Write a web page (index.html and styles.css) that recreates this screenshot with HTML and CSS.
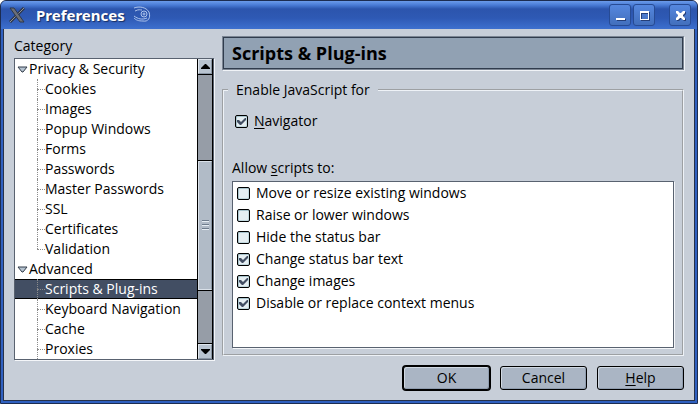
FILE: index.html
```html
<!DOCTYPE html>
<html lang="en">
<head>
  <meta charset="UTF-8" />
  <meta name="viewport" content="width=device-width, initial-scale=1.0" />
  <title>Preferences</title>
  <link rel="stylesheet" href="styles.css">
</head>
<body>
  <div class="window">
    <header class="titlebar">
      <svg class="app-icon" viewBox="0 0 16 16" width="16" height="16">
        <path d="M15 1L9 7M7 9l-6 6" stroke="#303848" stroke-width="3"/>
        <path d="M15 1L9 7M7 9l-6 6" stroke="#8d929b"/>
        <path d="M1 1h4l10 14h-4z" fill="#6b6f78" stroke="#303848"/>
      </svg>
      <h1 class="title">Preferences</h1>
      <svg class="gecko" viewBox="0 0 18 18" width="18" height="18" fill="none" stroke="#adc3ea">
        <path d="M1 2C6 0 13 1 16 6c2 6-1 10-6 9-5 0-7-1-9-3M1 10c4 3 8 4 13 2M2 5c4-2 5-1 7-1"/>
        <circle cx="11" cy="8" r="3"/>
        <circle cx="11" cy="8" r="1"/>
      </svg>
      <div class="window-buttons">
        <button class="window-button" aria-label="Minimize">
          <svg viewBox="0 0 22 22" width="22" height="22"><path d="M7 14h9v2H7z"/></svg>
        </button>
        <button class="window-button" aria-label="Maximize">
          <svg viewBox="0 0 22 22" width="22" height="22"><path fill-rule="evenodd" d="M7 7h9v9H7zM8 9v6h7V9z"/></svg>
        </button>
        <button class="window-button close" aria-label="Close">
          <svg viewBox="0 0 22 22" width="22" height="22"><path d="M7 7h2l2 2h1l2-2h2v2l-2 2v1l2 2v2h-2l-2-2h-1l-2 2H7v-2l2-2v-1L7 9z"/></svg>
        </button>
      </div>
    </header>

    <main class="content">
      <div class="panes">
        <section class="sidebar">
          <h2 class="label" id="category">Category</h2>
          <div class="tree-box">
            <ul class="tree" role="tree" aria-labelledby="category">
              <li>
                <div class="group"><svg viewBox="0 0 11 7" width="11" height="7"><path d="M1 1h9L6 6H5z"/></svg>Privacy &amp; Security</div>
                <ul class="branch">
                  <li>Cookies</li>
                  <li>Images</li>
                  <li>Popup Windows</li>
                  <li>Forms</li>
                  <li>Passwords</li>
                  <li>Master Passwords</li>
                  <li>SSL</li>
                  <li>Certificates</li>
                  <li class="last">Validation</li>
                </ul>
              </li>
              <li>
                <div class="group"><svg viewBox="0 0 11 7" width="11" height="7"><path d="M1 1h9L6 6H5z"/></svg>Advanced</div>
                <ul class="branch">
                  <li class="selected">Scripts &amp; Plug-ins</li>
                  <li>Keyboard Navigation</li>
                  <li>Cache</li>
                  <li>Proxies</li>
                </ul>
              </li>
            </ul>
            <div class="scrollbar">
              <button class="arrow" aria-label="Scroll up"><svg viewBox="0 0 9 5" width="9" height="5"><path d="M4 0h1l4 4v1H0V4z"/></svg></button>
              <div class="track"></div>
              <div class="thumb"><span class="grip"></span></div>
              <div class="track after"></div>
              <button class="arrow" aria-label="Scroll down"><svg viewBox="0 0 9 5" width="9" height="5"><path d="M4 5h1l4-4V0H0v1z"/></svg></button>
            </div>
          </div>
        </section>

        <section class="panel">
          <h2 class="panel-title">Scripts &amp; Plug-ins</h2>
          <fieldset class="settings">
            <legend>Enable JavaScript for</legend>
            <label class="option navigator"><input type="checkbox" checked><span><u>N</u>avigator</span></label>
            <h3 class="label" id="allow">Allow <u>s</u>cripts to:</h3>
            <div class="options" role="group" aria-labelledby="allow">
              <label class="option"><input type="checkbox">Move or resize existing windows</label>
              <label class="option"><input type="checkbox">Raise or lower windows</label>
              <label class="option"><input type="checkbox">Hide the status bar</label>
              <label class="option"><input type="checkbox" checked>Change status bar text</label>
              <label class="option"><input type="checkbox" checked>Change images</label>
              <label class="option"><input type="checkbox" checked>Disable or replace context menus</label>
            </div>
          </fieldset>
        </section>
      </div>

      <footer class="actions">
        <button class="action default">OK</button>
        <button class="action">Cancel</button>
        <button class="action"><u>H</u>elp</button>
      </footer>
    </main>
  </div>
</body>
</html>
```
FILE: styles.css
```css
* {
  box-sizing: border-box;
}
body {
  margin: 0;
  background-color: #fff;
  color: #000;
  font-family: "Open Sans", "Noto Sans", sans-serif;
  font-size: 14px;
  line-height: 20px;
}
h1, h2, h3, ul {
  margin: 0;
  padding: 0;
  font-weight: normal;
}
ul {
  list-style: none;
}
button {
  padding: 0;
  font: inherit;
}
u {
  text-underline-offset: 2px;
}
.window {
  display: flex;
  flex-direction: column;
  height: 100vh;
  background-color: #2f60c0;
  border: 1px solid #1c2c50;
  border-radius: 6px 6px 0 0;
  overflow: hidden;
}
.titlebar {
  display: flex;
  align-items: center;
  height: 28px;
  padding: 0 6px 0 8px;
  background: linear-gradient(#6b9bea 0, #4a7cd6 4px, #2c55ad 8px, #2e59b4 17px, #3d70cf 28px);
}
.title {
  margin: 0 8px 0 11px;
  color: #fff;
  font-family: "Noto Sans", sans-serif;
  font-size: 15px;
  font-weight: bold;
  text-shadow: 1px 1px 1px #172d60;
}
.window-buttons {
  display: flex;
  gap: 2px;
  margin-left: auto;
}
.window-button {
  width: 22px;
  height: 22px;
  border: 1px solid #274b94;
  border-radius: 3px;
  background: linear-gradient(#5587df, #426fbc);
}
.window-button svg {
  display: block;
  margin: -1px;
  fill: #fff;
  filter: drop-shadow(1px 1px 0 #253f78);
}
.window-button.close {
  margin-left: 12px;
}
.content {
  flex: 1;
  display: flex;
  flex-direction: column;
  min-height: 0;
  margin: 0 2px 2px;
  padding: 7px 10px 10px;
  background-color: #c7ced8;
  border: 1px solid #26314a;
  border-top: 0;
}
.panes {
  flex: 1;
  display: flex;
  gap: 8px;
  min-height: 0;
}
.sidebar {
  display: flex;
  flex-direction: column;
  width: 200px;
}
.label {
  font-size: 14px;
}
.tree-box {
  flex: 1;
  display: flex;
  min-height: 0;
  margin-top: 2px;
  background-color: #fff;
  border: 1px solid #596270;
  box-shadow: 1px 1px 0 #f4f6f9;
}
.tree {
  flex: 1;
  overflow: hidden;
}
.group {
  display: flex;
  align-items: center;
  gap: 1px;
  height: 20px;
  padding-left: 2px;
}
.group svg {
  fill: #b5c3d0;
  stroke: #333c4a;
}
.branch li {
  position: relative;
  height: 20px;
  padding-left: 30px;
  white-space: nowrap;
}
.branch li::before {
  content: "";
  position: absolute;
  left: 22px;
  top: 0;
  bottom: 0;
  border-left: 1px dotted #8c8c8c;
}
.branch li::after {
  content: "";
  position: absolute;
  left: 22px;
  top: 10px;
  width: 8px;
  border-top: 1px dotted #8c8c8c;
}
.branch .last::before {
  bottom: 10px;
}
.branch .selected {
  background-color: #424e63;
  box-shadow: inset 0 1px #000, inset 0 -1px #000;
  color: #fff;
}
.scrollbar {
  display: flex;
  flex-direction: column;
  width: 16px;
  background-color: #969da7;
  border: 1px solid #000;
  border-width: 0 1px;
}
.arrow {
  display: flex;
  align-items: center;
  justify-content: center;
  height: 15px;
  background-color: #b9c4d0;
  border: 1px solid #e0e6ed;
  border-right-color: #8995a3;
  border-bottom-color: #8995a3;
}
.track {
  flex: 87;
  border-top: 1px solid #000;
}
.thumb {
  flex: 129;
  display: flex;
  align-items: center;
  justify-content: center;
  background-color: #b1bbc7;
  border: 1px solid #d9e0e8;
  border-right-color: #8995a3;
  box-shadow: 0 -1px #000;
}
.grip {
  width: 7px;
  height: 10px;
  background: repeating-linear-gradient(#6f7d8d 0 1px, #e6edf3 1px 2px, transparent 2px 4px);
}
.track.after {
  flex: 53;
  border-bottom: 1px solid #000;
}
.panel {
  flex: 1;
  display: flex;
  flex-direction: column;
  min-width: 0;
  padding-bottom: 4px;
}
.panel-title {
  margin-bottom: 10px;
  padding: 4px 9px;
  background-color: #91a1b3;
  border: 1px solid #7b8593;
  box-shadow: inset 0 0 0 1px #303c4d, 1px 1px 0 #f0f3f7;
  font-size: 18px;
  font-weight: bold;
  line-height: 24px;
}
.settings {
  flex: 1;
  display: flex;
  flex-direction: column;
  min-width: 0;
  min-height: 0;
  margin: 0;
  padding: 10px 8px 6px;
  border: 2px groove #eef2f7;
}
.settings legend {
  margin-left: -4px;
  padding: 0 8px;
}
.option {
  display: flex;
  align-items: center;
  gap: 6px;
  height: 22px;
}
.option input {
  appearance: none;
  width: 13px;
  height: 13px;
  margin: 0;
  background-color: #e5eef2;
  border: 1px solid #000;
  border-radius: 2px;
  box-shadow: inset 1px 1px #a9c5ce, inset -1px -1px #c2d9df;
}
.option input:checked {
  background-image: url("data:image/svg+xml,%3Csvg xmlns='http://www.w3.org/2000/svg' viewBox='0 0 11 11'%3E%3Cpath d='M1 4h2l2 2 4-4h1v2L5 9H4L1 6z' fill='%23424e63'/%3E%3C/svg%3E");
}
.navigator {
  padding-left: 3px;
}
.settings .label {
  margin: 26px 0 3px;
}
.options {
  flex: 1;
  min-height: 0;
  padding: 0 4px;
  background-color: #fff;
  border: 1px solid #596270;
  box-shadow: 1px 1px 0 #f4f6f9;
}
.actions {
  display: flex;
  justify-content: flex-end;
  gap: 10px;
  padding-top: 6px;
}
.action {
  width: 87px;
  height: 24px;
  background-color: #aab5c4;
  border: 1px solid #000;
  border-radius: 3px;
  box-shadow: inset 1px 1px #d0d8e2, inset -1px -1px #8f9cae;
  color: #000;
}
.action.default {
  box-shadow: 0 0 0 1px #000, inset 1px 1px #d0d8e2, inset -1px -1px #8f9cae;
}
```
